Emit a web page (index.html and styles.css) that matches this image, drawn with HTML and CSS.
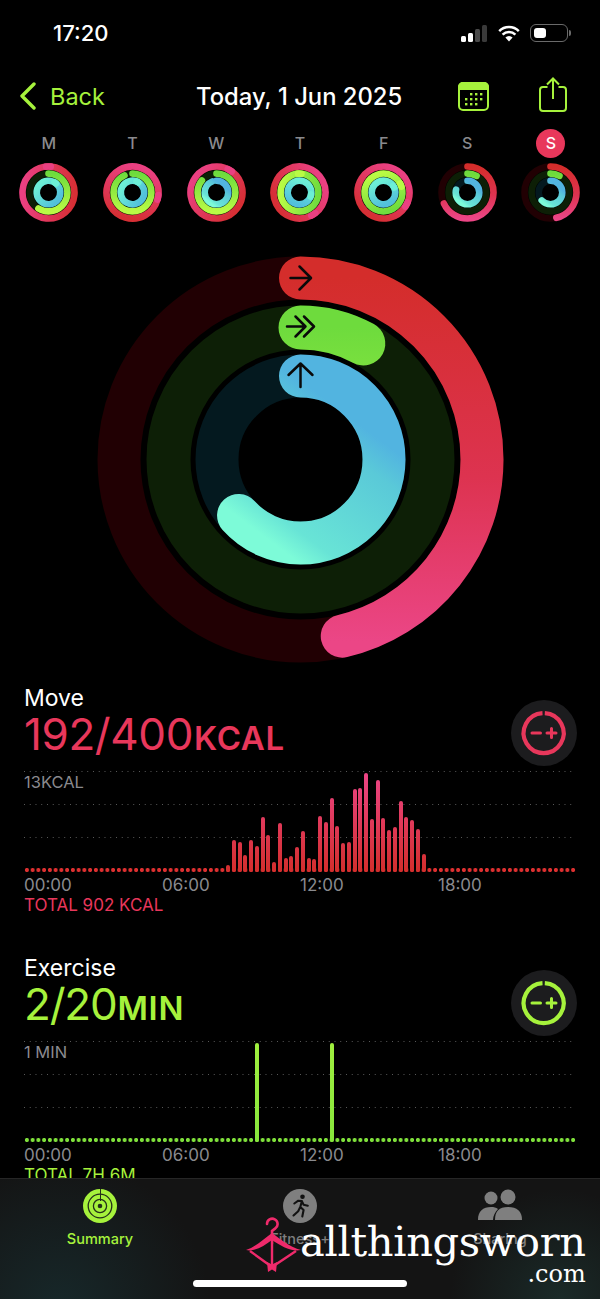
FILE: index.html
```html
<!doctype html>
<html>
<head>
    <meta charset="UTF-8">
    <title>Activity</title>
    <link rel="stylesheet" href="styles.css">
</head>
<body>
    <!-- shared ring gradients -->
    <svg class="defs" width="0" height="0">
        <linearGradient id="redP" x1="1" y1="0" x2="0" y2="0">
            <stop offset="0" stop-color="#d42d2b"/><stop offset="0.55" stop-color="#dd3350"/><stop offset="1" stop-color="#eb4686"/>
        </linearGradient>
        <linearGradient id="redW" x1="0" y1="0" x2="0" y2="1">
            <stop offset="0" stop-color="#ea4082"/><stop offset="1" stop-color="#d62f35"/>
        </linearGradient>
        <linearGradient id="greenP" x1="1" y1="0" x2="0" y2="0">
            <stop offset="0" stop-color="#6edb3d"/><stop offset="1" stop-color="#b9fb45"/>
        </linearGradient>
        <linearGradient id="greenW" x1="0" y1="0" x2="0" y2="1">
            <stop offset="0" stop-color="#b9fb45"/><stop offset="1" stop-color="#70dc3e"/>
        </linearGradient>
        <linearGradient id="blueP" x1="0.9" y1="0.8" x2="0.1" y2="0.2">
            <stop offset="0.12" stop-color="#52b4e0"/><stop offset="0.3" stop-color="#5ac9d8"/><stop offset="0.85" stop-color="#68e4d6"/><stop offset="1" stop-color="#7dfbd8"/>
        </linearGradient>
        <linearGradient id="blueW" x1="0" y1="0" x2="0" y2="1">
            <stop offset="0" stop-color="#6cefd6"/><stop offset="1" stop-color="#52c0dc"/>
        </linearGradient>
    </svg>

    <div class="status">
        <span class="clock">17:20</span>
        <div class="status-icons">
            <div class="signal"><i class="s1"></i><i class="s2"></i><i class="s3"></i><i class="s4"></i></div>
            <svg class="wifi" width="22" height="17" viewBox="0 0 22 17">
                <path d="M11 16.5 7.4 12.6a5 5 0 0 1 7.2 0z" fill="#fff"/>
                <path d="M4.6 9.7a9.2 9.2 0 0 1 12.8 0" fill="none" stroke="#fff" stroke-width="2.5"/>
                <path d="M1.2 6.1a14 14 0 0 1 19.6 0" fill="none" stroke="#fff" stroke-width="2.5"/>
            </svg>
            <div class="battery"><i></i></div>
            <div class="battery-tip"></div>
        </div>
    </div>

    <nav class="navbar">
        <div class="back">
            <svg width="17" height="28" viewBox="0 0 17 28"><path d="M15 2 3 14l12 12" fill="none" stroke="#a6f23c" stroke-width="3.4" stroke-linecap="round" stroke-linejoin="round"/></svg>
            <span>Back</span>
        </div>
        <div class="title">Today, 1 Jun 2025</div>
        <svg class="nav-cal" width="31" height="29" viewBox="0 0 31 29">
            <rect x="1" y="1" width="29" height="27" rx="4" fill="none" stroke="#a6f23c" stroke-width="2"/>
            <path d="M5 0h21a5 5 0 0 1 5 5v3H0V5a5 5 0 0 1 5-5z" fill="#a6f23c"/>
            <g fill="#a6f23c">
                <rect x="12" y="11" width="2.4" height="2.4"/><rect x="17" y="11" width="2.4" height="2.4"/><rect x="22" y="11" width="2.4" height="2.4"/>
                <rect x="7" y="16" width="2.4" height="2.4"/><rect x="12" y="16" width="2.4" height="2.4"/><rect x="17" y="16" width="2.4" height="2.4"/><rect x="22" y="16" width="2.4" height="2.4"/>
                <rect x="7" y="21" width="2.4" height="2.4"/><rect x="12" y="21" width="2.4" height="2.4"/><rect x="17" y="21" width="2.4" height="2.4"/>
            </g>
        </svg>
        <svg class="nav-share" width="28" height="35" viewBox="0 0 28 35">
            <path d="M8.5 10H4a3 3 0 0 0-3 3v18a3 3 0 0 0 3 3h20a3 3 0 0 0 3-3V13a3 3 0 0 0-3-3h-4.500" fill="none" stroke="#a6f23c" stroke-width="2"/>
            <path d="M14 22V2M8 7.500l6-6 6 6" fill="none" stroke="#a6f23c" stroke-width="2"/>
        </svg>
    </nav>

    <div class="week">
        <div class="day">
            <div class="letter">M</div>
            <svg class="mini" viewBox="0 0 59 59">
                <circle class="t-red" cx="29.500" cy="29.500" r="26"/><circle class="t-green" cx="29.500" cy="29.500" r="18.900"/><circle class="t-blue" cx="29.500" cy="29.500" r="11.800"/>
                <circle class="full" pathLength="100" stroke="url(#redW)" cx="29.500" cy="29.500" r="26" transform="rotate(-85 29.500 29.500)"/>
                <circle class="tip" pathLength="100" stroke="#ea4082" cx="29.500" cy="29.500" r="26" transform="rotate(-85 29.500 29.500)"/>
                <circle class="arc" pathLength="100" stroke="url(#greenP)" stroke-dasharray="59 100" cx="29.500" cy="29.500" r="18.900" transform="rotate(-90 29.500 29.500)"/>
                <circle class="full" pathLength="100" stroke="url(#blueW)" cx="29.500" cy="29.500" r="11.800" transform="rotate(-50 29.500 29.500)"/>
                <circle class="tip" pathLength="100" stroke="#6cefd6" cx="29.500" cy="29.500" r="11.800" transform="rotate(-50 29.500 29.500)"/>
            </svg>
        </div>
        <div class="day">
            <div class="letter">T</div>
            <svg class="mini" viewBox="0 0 59 59">
                <circle class="t-red" cx="29.500" cy="29.500" r="26"/><circle class="t-green" cx="29.500" cy="29.500" r="18.900"/><circle class="t-blue" cx="29.500" cy="29.500" r="11.800"/>
                <circle class="full" pathLength="100" stroke="url(#redW)" cx="29.500" cy="29.500" r="26" transform="rotate(16 29.500 29.500)"/>
                <circle class="tip" pathLength="100" stroke="#ea4082" cx="29.500" cy="29.500" r="26" transform="rotate(16 29.500 29.500)"/>
                <circle class="arc" pathLength="100" stroke="url(#greenP)" stroke-dasharray="93 100" cx="29.500" cy="29.500" r="18.900" transform="rotate(-90 29.500 29.500)"/>
                <circle class="full" pathLength="100" stroke="url(#blueW)" cx="29.500" cy="29.500" r="11.800" transform="rotate(-60 29.500 29.500)"/>
                <circle class="tip" pathLength="100" stroke="#6cefd6" cx="29.500" cy="29.500" r="11.800" transform="rotate(-60 29.500 29.500)"/>
            </svg>
        </div>
        <div class="day">
            <div class="letter">W</div>
            <svg class="mini" viewBox="0 0 59 59">
                <circle class="t-red" cx="29.500" cy="29.500" r="26"/><circle class="t-green" cx="29.500" cy="29.500" r="18.900"/><circle class="t-blue" cx="29.500" cy="29.500" r="11.800"/>
                <circle class="full" pathLength="100" stroke="url(#redW)" cx="29.500" cy="29.500" r="26" transform="rotate(-54 29.500 29.500)"/>
                <circle class="tip" pathLength="100" stroke="#ea4082" cx="29.500" cy="29.500" r="26" transform="rotate(-54 29.500 29.500)"/>
                <circle class="arc" pathLength="100" stroke="url(#greenP)" stroke-dasharray="86 100" cx="29.500" cy="29.500" r="18.900" transform="rotate(-90 29.500 29.500)"/>
                <circle class="arc" pathLength="100" stroke="url(#blueP)" stroke-dasharray="94 100" cx="29.500" cy="29.500" r="11.800" transform="rotate(-90 29.500 29.500)"/>
            </svg>
        </div>
        <div class="day">
            <div class="letter">T</div>
            <svg class="mini" viewBox="0 0 59 59">
                <circle class="t-red" cx="29.500" cy="29.500" r="26"/><circle class="t-green" cx="29.500" cy="29.500" r="18.900"/><circle class="t-blue" cx="29.500" cy="29.500" r="11.800"/>
                <circle class="full" pathLength="100" stroke="url(#redW)" cx="29.500" cy="29.500" r="26" transform="rotate(63 29.500 29.500)"/>
                <circle class="tip" pathLength="100" stroke="#ea4082" cx="29.500" cy="29.500" r="26" transform="rotate(63 29.500 29.500)"/>
                <circle class="full" pathLength="100" stroke="url(#greenW)" cx="29.500" cy="29.500" r="18.900" transform="rotate(-84 29.500 29.500)"/>
                <circle class="tip" pathLength="100" stroke="#b9fb45" cx="29.500" cy="29.500" r="18.900" transform="rotate(-84 29.500 29.500)"/>
                <circle class="full" pathLength="100" stroke="url(#blueW)" cx="29.500" cy="29.500" r="11.800" transform="rotate(20 29.500 29.500)"/>
                <circle class="tip" pathLength="100" stroke="#6cefd6" cx="29.500" cy="29.500" r="11.800" transform="rotate(20 29.500 29.500)"/>
            </svg>
        </div>
        <div class="day">
            <div class="letter">F</div>
            <svg class="mini" viewBox="0 0 59 59">
                <circle class="t-red" cx="29.500" cy="29.500" r="26"/><circle class="t-green" cx="29.500" cy="29.500" r="18.900"/><circle class="t-blue" cx="29.500" cy="29.500" r="11.800"/>
                <circle class="full" pathLength="100" stroke="url(#redW)" cx="29.500" cy="29.500" r="26" transform="rotate(33 29.500 29.500)"/>
                <circle class="tip" pathLength="100" stroke="#ea4082" cx="29.500" cy="29.500" r="26" transform="rotate(33 29.500 29.500)"/>
                <circle class="full" pathLength="100" stroke="url(#greenW)" cx="29.500" cy="29.500" r="18.900" transform="rotate(-18 29.500 29.500)"/>
                <circle class="tip" pathLength="100" stroke="#b9fb45" cx="29.500" cy="29.500" r="18.900" transform="rotate(-18 29.500 29.500)"/>
                <circle class="full" pathLength="100" stroke="url(#blueW)" cx="29.500" cy="29.500" r="11.800" transform="rotate(-25 29.500 29.500)"/>
                <circle class="tip" pathLength="100" stroke="#6cefd6" cx="29.500" cy="29.500" r="11.800" transform="rotate(-25 29.500 29.500)"/>
            </svg>
        </div>
        <div class="day">
            <div class="letter">S</div>
            <svg class="mini" viewBox="0 0 59 59">
                <circle class="t-red" cx="29.500" cy="29.500" r="26"/><circle class="t-green" cx="29.500" cy="29.500" r="18.900"/><circle class="t-blue" cx="29.500" cy="29.500" r="11.800"/>
                <circle class="arc" pathLength="100" stroke="url(#redP)" stroke-dasharray="68 100" cx="29.500" cy="29.500" r="26" transform="rotate(-90 29.500 29.500)"/>
                <circle class="arc" pathLength="100" stroke="url(#greenP)" stroke-dasharray="8 100" cx="29.500" cy="29.500" r="18.900" transform="rotate(-90 29.500 29.500)"/>
                <circle class="arc" pathLength="100" stroke="url(#blueP)" stroke-dasharray="79 100" cx="29.500" cy="29.500" r="11.800" transform="rotate(-90 29.500 29.500)"/>
            </svg>
        </div>
        <div class="day">
            <div class="letter today">S</div>
            <svg class="mini" viewBox="0 0 59 59">
                <circle class="t-red" cx="29.500" cy="29.500" r="26"/><circle class="t-green" cx="29.500" cy="29.500" r="18.900"/><circle class="t-blue" cx="29.500" cy="29.500" r="11.800"/>
                <circle class="arc" pathLength="100" stroke="url(#redP)" stroke-dasharray="46.300 100" cx="29.500" cy="29.500" r="26" transform="rotate(-90 29.500 29.500)"/>
                <circle class="arc" pathLength="100" stroke="url(#greenP)" stroke-dasharray="7.900 100" cx="29.500" cy="29.500" r="18.900" transform="rotate(-90 29.500 29.500)"/>
                <circle class="arc" pathLength="100" stroke="url(#blueP)" stroke-dasharray="63.300 100" cx="29.500" cy="29.500" r="11.800" transform="rotate(-90 29.500 29.500)"/>
            </svg>
        </div>
    </div>

    <svg class="big-rings" width="407" height="407" viewBox="0 0 407 407">
        <circle class="t-red big-red" cx="203.500" cy="203.500" r="181.500"/>
        <circle class="t-green big-green" cx="203.500" cy="203.500" r="132"/>
        <circle class="t-blue big-blue" cx="203.500" cy="203.500" r="83.500"/>
        <circle class="arc big-red" pathLength="100" stroke="url(#redP)" stroke-dasharray="46.300 100" cx="203.500" cy="203.500" r="181.500" transform="rotate(-90 203.500 203.500)"/>
        <circle class="arc big-green" pathLength="100" stroke="url(#greenP)" stroke-dasharray="7.900 100" cx="203.500" cy="203.500" r="132" transform="rotate(-90 203.500 203.500)"/>
        <circle class="arc big-blue" pathLength="100" stroke="url(#blueP)" stroke-dasharray="63.300 100" cx="203.500" cy="203.500" r="83.500" transform="rotate(-90 203.500 203.500)"/>
        <g class="arrows">
            <path d="M193.500 22h20M202.500 10.500l11.500 11.500-11.500 11.500"/>
            <path d="M190 70.500h18.500M198.500 60.500l10 10-10 10M207 60.500l10 10-10 10"/>
            <path d="M203.500 131v-23.500M191.500 119l12-11.500 12 11.500"/>
        </g>
    </svg>

    <section class="metric move">
        <div class="metric-head">
            <div>
                <div class="metric-name">Move</div>
                <div class="metric-value">192/400<span>KCAL</span></div>
            </div>
            <svg class="adjust" width="66" height="66" viewBox="0 0 66 66">
                <circle cx="33" cy="33" r="33" fill="#1c1c1e"/>
                <path d="M33.800 13.100A20 20 0 1 1 31.500 13.100" fill="none" stroke="currentColor" stroke-width="4.200"/>
                <path d="M21 33h8.500M36 33h9M40.500 28.500v9" fill="none" stroke="currentColor" stroke-width="3" stroke-linecap="round"/>
            </svg>
        </div>
        <div class="chart">
            <div class="lines"><i></i><i></i><i></i></div>
            <div class="axis-label">13KCAL</div>
            <div class="bars">
                <div class="bar start" style="height:7px"></div>
                <div class="bar" style="height:32px"></div>
                <div class="bar" style="height:30px"></div>
                <div class="bar" style="height:17px"></div>
                <div class="bar" style="height:32px"></div>
                <div class="bar" style="height:26px"></div>
                <div class="bar" style="height:55px"></div>
                <div class="bar" style="height:37px"></div>
                <div class="bar" style="height:10px"></div>
                <div class="bar" style="height:49px"></div>
                <div class="bar" style="height:14px"></div>
                <div class="bar" style="height:16px"></div>
                <div class="bar" style="height:25px"></div>
                <div class="bar" style="height:41px"></div>
                <div class="bar" style="height:14px"></div>
                <div class="bar" style="height:13px"></div>
                <div class="bar" style="height:56px"></div>
                <div class="bar" style="height:50px"></div>
                <div class="bar" style="height:74px"></div>
                <div class="bar" style="height:46px"></div>
                <div class="bar" style="height:29px"></div>
                <div class="bar" style="height:30px"></div>
                <div class="bar" style="height:83px"></div>
                <div class="bar" style="height:84px"></div>
                <div class="bar" style="height:99px"></div>
                <div class="bar" style="height:53px"></div>
                <div class="bar" style="height:92px"></div>
                <div class="bar" style="height:54px"></div>
                <div class="bar" style="height:42px"></div>
                <div class="bar" style="height:45px"></div>
                <div class="bar" style="height:71px"></div>
                <div class="bar" style="height:55px"></div>
                <div class="bar" style="height:52px"></div>
                <div class="bar" style="height:43px"></div>
                <div class="bar" style="height:18px"></div>
            </div>
        </div>
        <div class="times"><span>00:00</span><span>06:00</span><span>12:00</span><span>18:00</span></div>
        <div class="total">TOTAL 902 KCAL</div>
    </section>

    <section class="metric exercise">
        <div class="metric-head">
            <div>
                <div class="metric-name">Exercise</div>
                <div class="metric-value">2/20<span>MIN</span></div>
            </div>
            <svg class="adjust" width="66" height="66" viewBox="0 0 66 66">
                <circle cx="33" cy="33" r="33" fill="#1c1c1e"/>
                <path d="M33.800 13.100A20 20 0 1 1 31.500 13.100" fill="none" stroke="currentColor" stroke-width="4.200"/>
                <path d="M21 33h8.500M36 33h9M40.500 28.500v9" fill="none" stroke="currentColor" stroke-width="3" stroke-linecap="round"/>
            </svg>
        </div>
        <div class="chart">
            <div class="lines"><i></i><i></i><i></i></div>
            <div class="axis-label">1 MIN</div>
            <div class="bars">
                <div class="bar first-min"></div>
                <div class="bar second-min"></div>
            </div>
        </div>
        <div class="times"><span>00:00</span><span>06:00</span><span>12:00</span><span>18:00</span></div>
        <div class="total">TOTAL 7H 6M</div>
    </section>

    <!-- tab bar sits over the scrolled content -->
    <div class="tabbar">
        <div class="tab active">
            <svg width="36" height="36" viewBox="0 0 36 36">
                <circle cx="18" cy="18" r="17" fill="#a6f23c"/>
                <circle cx="18" cy="18" r="11.800" fill="none" stroke="#23301a" stroke-width="1.300"/>
                <circle cx="18" cy="18" r="6.600" fill="none" stroke="#23301a" stroke-width="1.300"/>
                <circle cx="18" cy="18" r="2.300" fill="#23301a"/>
                <path d="M18.500 1v12" stroke="#23301a" stroke-width="1"/>
            </svg>
            <span>Summary</span>
        </div>
        <div class="tab">
            <svg width="36" height="36" viewBox="0 0 36 36">
                <circle cx="18" cy="18" r="17" fill="#7f7f7f"/>
                <circle cx="20.500" cy="8.800" r="2.300" fill="#111"/>
                <path d="M12.300 15.500l4-2.800 3.600.3-1.600 6 3.300 3-1.300 6.500M18 19.500l-1.800 3.700-4.700 4.300M20 13.500l1.600 3.300 4.200 1" fill="none" stroke="#111" stroke-width="2.100" stroke-linecap="round" stroke-linejoin="round"/>
            </svg>
            <span>Fitness+</span>
        </div>
        <div class="tab">
            <svg width="46" height="36" viewBox="0 0 46 36">
                <circle cx="14" cy="10" r="6.500" fill="#7f7f7f"/>
                <circle cx="31" cy="9" r="7.500" fill="#7f7f7f"/>
                <path d="M1 32c0-9 5-13 13-13 3 0 5 .5 7 2-3 3-5 7-5 11z" fill="#7f7f7f"/>
                <path d="M18 32c0-9 4-13 13-13s14 4 14 13z" fill="#7f7f7f"/>
            </svg>
            <span>Sharing</span>
        </div>
    </div>

    <!-- watermark over the tab bar -->
    <div class="watermark">
        <svg width="57" height="58" viewBox="0 0 57 58">
            <path d="M22 7a5.300 5.300 0 1 1 8.300 4.400L27 14v4" fill="none" stroke="#ef2a6b" stroke-width="2.600" stroke-linecap="round"/>
            <path d="M1 33C10 30 19 22 27 16c8 6 18 14 29 17-10 2-20-4-29-10C19 29 10 35 1 33z" fill="#ef2a6b"/>
            <path d="M5 34l22 16 24-16M27 20v30" fill="none" stroke="#ef2a6b" stroke-width="2.400"/>
            <path d="M22 45l5 2.500 5-2.500-1 10-4-2.500-4 2.500z" fill="#ef2a6b"/>
        </svg>
        <div class="brand">
            <div class="brand-name">allthingsworn</div>
            <div class="brand-tld">.com</div>
        </div>
    </div>
    <div class="home"></div>
</body>
</html>
```

FILE: styles.css
```css
* {
    box-sizing: border-box;
}
body {
    position: relative;
    width: 600px;
    height: 1299px;
    margin: 0;
    overflow: hidden;
    background-color: #000;
    color: #fff;
    font-family: Inter, "Liberation Sans", sans-serif;
}
.defs {
    position: absolute;
}

/* status bar */
.status {
    display: flex;
    align-items: center;
    height: 66px;
    padding: 0 29px 0 53px;
}
.clock {
    font-size: 22px;
    font-weight: 500;
}
.status-icons {
    display: flex;
    align-items: center;
    margin-left: auto;
}
.signal {
    display: flex;
    align-items: flex-end;
    gap: 2px;
    height: 17px;
    margin-right: 11px;
}
.signal i {
    width: 5px;
    border-radius: 1.5px;
    background-color: #fff;
}
.s1 { height: 6px; }
.s2 { height: 9px; }
.signal .s3 { height: 13px; background-color: #4a4a4a; }
.signal .s4 { height: 17px; background-color: #3a3a3a; }
.battery {
    width: 38px;
    height: 18px;
    margin-left: 10px;
    padding: 3px;
    border: 1.5px solid #6a6a6a;
    border-radius: 6px;
}
.battery i {
    display: block;
    width: 12px;
    height: 100%;
    border-radius: 3px;
    background-color: #fff;
}
.battery-tip {
    width: 2px;
    height: 6px;
    margin-left: 1px;
    border-radius: 0 2px 2px 0;
    background-color: #6a6a6a;
}

/* top navigation */
.navbar {
    display: flex;
    align-items: center;
    height: 60px;
    padding-left: 19px;
}
.back {
    display: flex;
    align-items: center;
    gap: 14px;
    width: 177px;
    color: #a6f23c;
    font-size: 23.500px;
}
.title {
    width: 262px;
    font-size: 23.800px;
    font-weight: 500;
    white-space: nowrap;
}
.nav-cal {
    margin-right: 50px;
}
.nav-share {
    margin-top: -3px;
}

/* week strip */
.week {
    display: flex;
    padding-left: 7px;
}
.day {
    display: flex;
    flex-direction: column;
    align-items: center;
    width: 83.7px;
}
.letter {
    width: 29px;
    height: 29px;
    margin: 2.5px 0;
    border-radius: 50%;
    color: #8a8a8e;
    font-size: 16px;
    font-weight: 500;
    line-height: 29px;
    text-align: center;
}
.today {
    background-color: #e8375b;
    color: #fff;
}
.mini {
    width: 59px;
    height: 59px;
    margin-top: 3px;
    stroke-width: 6.6;
}

/* rings */
circle.t-red, circle.t-green, circle.t-blue, .arc, .full, .tip {
    fill: none;
}
.t-red { stroke: #210003; }
.t-green { stroke: #0d1f06; }
.t-blue { stroke: #04191f; }
.arc {
    stroke-linecap: round;
}
.tip {
    stroke-linecap: round;
    stroke-dasharray: 3 97;
    stroke-dashoffset: 3;
}
.big-rings {
    display: block;
    margin: 34px auto 0;
}
.big-red { stroke-width: 43; }
.big-green { stroke-width: 44; }
.big-blue { stroke-width: 43; }
.arrows path {
    fill: none;
    stroke: #0a0a0a;
    stroke-width: 2.500;
    stroke-linecap: round;
    stroke-linejoin: round;
}

/* metric sections */
.metric {
    margin-top: 21px;
    padding-left: 24px;
}
.move {
    color: #e8375b;
    --bar: linear-gradient(to top, #d32e2c, #ec4587);
    --dot: #dd3030;
}
.exercise {
    margin-top: 39px;
    color: #a6f23c;
    --bar: linear-gradient(to top, #86e63c, #a0ef3e);
    --dot: #7fe03b;
}
.metric-head {
    display: flex;
    justify-content: space-between;
    height: 87px;
    padding-right: 23px;
}
.metric-name {
    height: 28px;
    color: #fff;
    font-size: 23px;
    line-height: 28px;
}
.metric-value {
    height: 46px;
    font-size: 44px;
    line-height: 44px;
    letter-spacing: -0.400px;
}
.exercise .metric-value {
    letter-spacing: -1.200px;
}
.metric-value span {
    margin-left: 1px;
    font-size: 33px;
    font-weight: 600;
    letter-spacing: 0.700px;
}
.adjust {
    margin-top: 16px;
}
.chart {
    display: grid;
    width: 552px;
    height: 101px;
}
.chart > * {
    grid-area: 1 / 1;
}
.lines i {
    display: block;
    height: 33px;
    background: linear-gradient(to right, #5a5a5a 1px, transparent 1px) 0 0 / 5.750px 1px repeat-x;
}
.axis-label {
    margin-top: 1px;
    color: #8a8a8e;
    font-size: 16.500px;
    line-height: 20px;
}
.bars {
    display: grid;
    grid-template-columns: repeat(96, 1fr);
    background: radial-gradient(circle, var(--dot) 1.800px, transparent 2.300px) 0 calc(100% + 1px) / 5.750px 6px repeat-x;
}
.bar {
    align-self: end;
    justify-self: center;
    width: 4px;
    border-radius: 2px;
    background: var(--bar) bottom / 100% 100px no-repeat;
}
.start { grid-column-start: 36; }
.first-min { grid-column: 41; grid-row: 1; height: 99px; }
.second-min { grid-column: 54; grid-row: 1; height: 99px; }
.times {
    display: flex;
    margin-top: 1px;
}
.times span {
    width: 138px;
    color: #8a8a8e;
    font-size: 17px;
    line-height: 24px;
}
.total {
    margin-top: -2px;
    font-size: 17px;
    line-height: 20px;
}

/* bottom tabs */
.tabbar {
    position: absolute;
    left: 0;
    right: 0;
    bottom: 0;
    display: flex;
    height: 121px;
    padding-top: 9px;
    border-top: 1px solid #262626;
    background:
        radial-gradient(circle at 60px 130px, #17282a 0, transparent 150px),
        radial-gradient(circle at 560px 120px, #1a2a28 0, transparent 110px),
        #141414;
}
.tab {
    display: flex;
    flex: 1;
    flex-direction: column;
    align-items: center;
    gap: 6px;
    color: #7f7f7f;
    font-size: 14.500px;
    font-weight: 500;
    line-height: 18px;
}
.tab.active {
    color: #a6f23c;
}

/* watermark */
.watermark {
    position: absolute;
    left: 245px;
    top: 1217px;
    display: flex;
}
.brand {
    margin-left: -2px;
    color: #fff;
    font-family: "DejaVu Serif", "Liberation Serif", serif;
    text-align: right;
}
.brand-name {
    height: 42px;
    margin-top: 3px;
    font-size: 41.500px;
    line-height: 44px;
    letter-spacing: -0.300px;
}
.brand-tld {
    font-size: 24px;
    line-height: 24px;
}
.home {
    position: absolute;
    left: 193px;
    top: 1280px;
    width: 214px;
    height: 7px;
    border-radius: 4px;
    background-color: #fff;
}
```
